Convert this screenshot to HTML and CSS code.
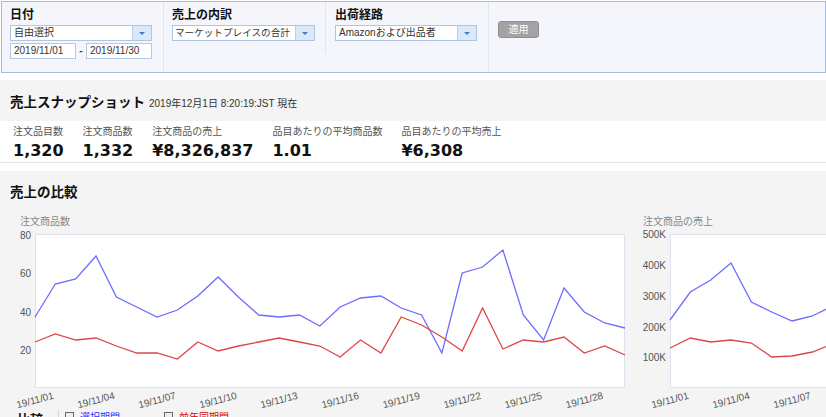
FILE: index.html
```html
<!DOCTYPE html>
<html lang="ja">
<head>
<meta charset="utf-8">
<title>売上ダッシュボード</title>
<link rel="stylesheet" href="styles.css">
</head>
<body>
<div class="filters">
  <div class="fcol c1">
    <div class="flabel">日付</div>
    <div class="select s1"><span class="sel-text">自由選択</span><span class="sel-arrow"></span></div>
    <div class="dates"><span class="date">2019/11/01</span><span class="dash">-</span><span class="date">2019/11/30</span></div>
  </div>
  <div class="fcol c2">
    <div class="flabel">売上の内訳</div>
    <div class="select s2"><span class="sel-text narrow">マーケットプレイスの合計</span><span class="sel-arrow"></span></div>
  </div>
  <div class="fcol c3">
    <div class="flabel">出荷経路</div>
    <div class="select s3"><span class="sel-text">Amazonおよび出品者</span><span class="sel-arrow"></span></div>
  </div>
  <div class="fcol c4">
    <button class="apply">適用</button>
  </div>
</div>

<div class="snapshot">
  <div class="snap-head">
    <h2 class="sec-title">売上スナップショット</h2>
    <span class="stamp">2019年12月1日 8:20:19:JST 現在</span>
  </div>
  <div class="metrics">
    <div class="metric"><div class="m-label">注文品目数</div><div class="m-value">1,320</div></div>
    <div class="metric"><div class="m-label">注文商品数</div><div class="m-value">1,332</div></div>
    <div class="metric"><div class="m-label">注文商品の売上</div><div class="m-value">¥8,326,837</div></div>
    <div class="metric"><div class="m-label">品目あたりの平均商品数</div><div class="m-value">1.01</div></div>
    <div class="metric"><div class="m-label">品目あたりの平均売上</div><div class="m-value">¥6,308</div></div>
  </div>
</div>

<div class="compare">
  <h2 class="sec-title cmp-title">売上の比較</h2>
  <div class="charts">
    <div class="chart-block cb1">
      <div class="chart-title">注文商品数</div>
      <svg class="chart" width="620" height="180" viewBox="0 0 620 180">
        <rect x="25.5" y="5.5" width="589" height="153" fill="#ffffff" stroke="#dce3ee"/>
        <g class="ylab" text-anchor="end">
          <text x="21" y="6" dy="0.35em">80</text>
          <text x="21" y="44.5" dy="0.35em">60</text>
          <text x="21" y="83" dy="0.35em">40</text>
          <text x="21" y="121.5" dy="0.35em">20</text>
        </g>
        <polyline class="ln-blue" points="25,88 45.3,55 65.7,50 86,27 106.4,68 126.7,78 147.1,88 167.4,81 187.8,67 208.1,48 228.4,68 248.8,86 269.1,88 289.5,86 309.8,97 330.2,78 350.5,69 370.9,67 391.2,79 411.6,86 431.9,124 452.2,44 472.6,38 492.9,21 513.3,86 533.6,111 554,59 574.3,83 594.7,94 615,99"/>
        <polyline class="ln-red" points="25,113 45.3,105 65.7,111 86,109 106.4,117 126.7,124 147.1,124 167.4,130 187.8,113 208.1,122 228.4,117 248.8,113 269.1,109 289.5,113 309.8,117 330.2,128 350.5,111 370.9,124 391.2,88 411.6,96 431.9,108 452.2,122 472.6,79 492.9,120 513.3,111 533.6,113 554,108 574.3,124 594.7,117 615,126"/>
        <g class="xlab" text-anchor="middle">
          <text transform="translate(25,171) rotate(-15)" dy="0.35em">19/11/01</text>
          <text transform="translate(86,171) rotate(-15)" dy="0.35em">19/11/04</text>
          <text transform="translate(147.1,171) rotate(-15)" dy="0.35em">19/11/07</text>
          <text transform="translate(208.1,171) rotate(-15)" dy="0.35em">19/11/10</text>
          <text transform="translate(269.1,171) rotate(-15)" dy="0.35em">19/11/13</text>
          <text transform="translate(330.2,171) rotate(-15)" dy="0.35em">19/11/16</text>
          <text transform="translate(391.2,171) rotate(-15)" dy="0.35em">19/11/19</text>
          <text transform="translate(452.2,171) rotate(-15)" dy="0.35em">19/11/22</text>
          <text transform="translate(513.3,171) rotate(-15)" dy="0.35em">19/11/25</text>
          <text transform="translate(574.3,171) rotate(-15)" dy="0.35em">19/11/28</text>
        </g>
      </svg>
    </div>
    <div class="chart-block cb2">
      <div class="chart-title t2">注文商品の売上</div>
      <svg class="chart" width="640" height="180" viewBox="0 0 640 180">
        <rect x="40.5" y="5.5" width="589" height="153" fill="#ffffff" stroke="#dce3ee"/>
        <g class="ylab" text-anchor="end">
          <text x="36" y="5" dy="0.35em">500K</text>
          <text x="36" y="36.5" dy="0.35em">400K</text>
          <text x="36" y="67.3" dy="0.35em">300K</text>
          <text x="36" y="98" dy="0.35em">200K</text>
          <text x="36" y="128.8" dy="0.35em">100K</text>
        </g>
        <polyline class="ln-blue" points="40,91 60.3,63 80.7,51 101,34 121.4,73 141.7,83 162.1,92 182.4,87 202.8,77 223.1,60 243.5,75"/>
        <polyline class="ln-red" points="40,119 60.3,109 80.7,113 101,111 121.4,114 141.7,128 162.1,127 182.4,123 202.8,115 223.1,118 243.5,116"/>
        <g class="xlab" text-anchor="middle">
          <text transform="translate(40,171) rotate(-15)" dy="0.35em">19/11/01</text>
          <text transform="translate(101,171) rotate(-15)" dy="0.35em">19/11/04</text>
          <text transform="translate(162.1,171) rotate(-15)" dy="0.35em">19/11/07</text>
          <text transform="translate(223.1,171) rotate(-15)" dy="0.35em">19/11/10</text>
        </g>
      </svg>
    </div>
  </div>
  <div class="legend">
    <span class="lg-title">比較</span>
    <span class="lg-div"></span>
    <span class="lg-item"><span class="chk"></span><span class="lg-blue">選択期間</span></span>
    <span class="lg-item"><span class="chk"></span><span class="lg-red">前年同期間</span></span>
  </div>
</div>
</body>
</html>
```

FILE: styles.css
```css
html, body {
  margin: 0;
  padding: 0;
  overflow: hidden;
  background: #ffffff;
}
body {
  font-family: "Liberation Sans", "Noto Sans CJK JP", sans-serif;
  color: #222;
  width: 826px;
}

/* Filter bar */
.filters {
  display: flex;
  box-sizing: border-box;
  height: 72px;
  margin: 1px 0 7px 1px;
  border: 1px solid #9fbde4;
  background: #f4f6fb;
}
.fcol {
  box-sizing: border-box;
  padding-top: 5px;
  border-right: 1px solid #e1e5ec;
}
.c1 { width: 162px; padding-left: 8px; }
.c2 { width: 162px; padding-left: 8px; align-self: flex-start; height: 52px; }
.c3 { width: 163px; padding-left: 9px; }
.c4 { border-right: none; padding-left: 9px; padding-top: 17px; }

.flabel {
  font-size: 12px;
  font-weight: bold;
  line-height: 16px;
  color: #111;
}
.select {
  display: flex;
  box-sizing: border-box;
  height: 16px;
  margin-top: 2px;
  border: 1px solid #adc6e7;
  background: #fff;
}
.s1 { width: 142px; }
.s2 { width: 143px; }
.s3 { width: 142px; }
.sel-text {
  flex: 1;
  min-width: 0;
  padding-left: 3px;
  font-size: 10px;
  line-height: 14px;
  color: #333;
  white-space: nowrap;
  overflow: hidden;
}
.sel-text.narrow {
  padding-left: 2px;
  font-size: 9.6px;
}
.sel-arrow {
  position: relative;
  flex: none;
  width: 18px;
  background: #dbe8f8;
  border-left: 1px solid #b9cfeb;
}
.sel-arrow::after {
  content: "";
  position: absolute;
  left: 6px;
  top: 6px;
  border-left: 3px solid transparent;
  border-right: 3px solid transparent;
  border-top: 3px solid #3b7dd6;
}
.dates {
  display: flex;
  margin-top: 2px;
}
.date {
  box-sizing: border-box;
  width: 66px;
  height: 16px;
  border: 1px solid #b3c9e8;
  background: #fff;
  padding-left: 3px;
  font-size: 10px;
  line-height: 14px;
  color: #333;
}
.dash {
  width: 10px;
  text-align: center;
  font-size: 10px;
  line-height: 16px;
  font-weight: bold;
  color: #444;
}
.apply {
  box-sizing: border-box;
  width: 41px;
  height: 17px;
  padding: 0;
  border: 1px solid #8f8f8f;
  border-radius: 3px;
  background: #a3a3a3;
  color: #fff;
  font-family: "Liberation Sans", "Noto Sans CJK JP", sans-serif;
  font-size: 10px;
  line-height: 15px;
}

/* Snapshot */
.snapshot {
  background: #f4f4f4;
  margin-bottom: 8px;
}
.snap-head {
  display: flex;
  align-items: baseline;
  gap: 4px;
  box-sizing: border-box;
  height: 41px;
  padding: 11px 0 0 10px;
}
.sec-title {
  margin: 0;
  font-family: "Noto Sans CJK JP", sans-serif;
  font-size: 13.5px;
  font-weight: bold;
  line-height: 20px;
  color: #111;
}
.stamp {
  font-size: 10px;
  color: #333;
}
.metrics {
  display: flex;
  gap: 19px;
  background: #fff;
  padding: 4px 13px 2px;
  border-bottom: 1px solid #e3e3e3;
}
.m-label {
  font-size: 10px;
  line-height: 14px;
  color: #555;
  white-space: nowrap;
}
.m-value {
  margin-top: 3px;
  font-family: "DejaVu Sans", sans-serif;
  font-weight: bold;
  font-size: 16px;
  line-height: 18px;
  color: #111;
  white-space: nowrap;
}

/* Comparison */
.compare {
  background: #f4f4f4;
  padding: 10px 0 20px 10px;
  height: 300px;
}
.charts {
  display: flex;
  margin-top: 13px;
}
.chart-block {
  overflow: hidden;
  min-width: 0;
}
.cb1 { width: 620px; flex: none; }
.cb2 { flex: 1; }
.chart-title {
  padding-left: 10px;
  font-size: 10px;
  line-height: 15px;
  color: #888;
  white-space: nowrap;
}
.chart-title.t2 { padding-left: 13px; }
.chart {
  display: block;
  font-family: "Liberation Sans", sans-serif;
}
.ylab text, .xlab text {
  font-size: 10px;
  fill: #555;
}
.ln-blue {
  fill: none;
  stroke: #6c6cff;
  stroke-width: 1.3;
}
.ln-red {
  fill: none;
  stroke: #dd4646;
  stroke-width: 1.3;
}

.legend {
  display: flex;
  align-items: flex-start;
  padding-left: 7px;
  height: 20px;
}
.lg-title {
  font-family: "Noto Sans CJK JP", sans-serif;
  font-size: 13px;
  font-weight: bold;
  line-height: 16px;
  color: #111;
  margin-top: 2px;
}
.lg-div {
  width: 1px;
  height: 16px;
  background: #d6d6d6;
  margin: 1px 6px 0 15px;
}
.lg-item {
  display: flex;
  align-items: flex-start;
  gap: 6px;
  margin-right: 44px;
  margin-top: 3px;
  font-size: 10px;
  line-height: 12px;
}
.chk {
  box-sizing: border-box;
  width: 9px;
  height: 9px;
  border: 1px solid #666;
  background: #eee;
}
.lg-blue { color: #3333ff; }
.lg-red { color: #dd0000; }
```
